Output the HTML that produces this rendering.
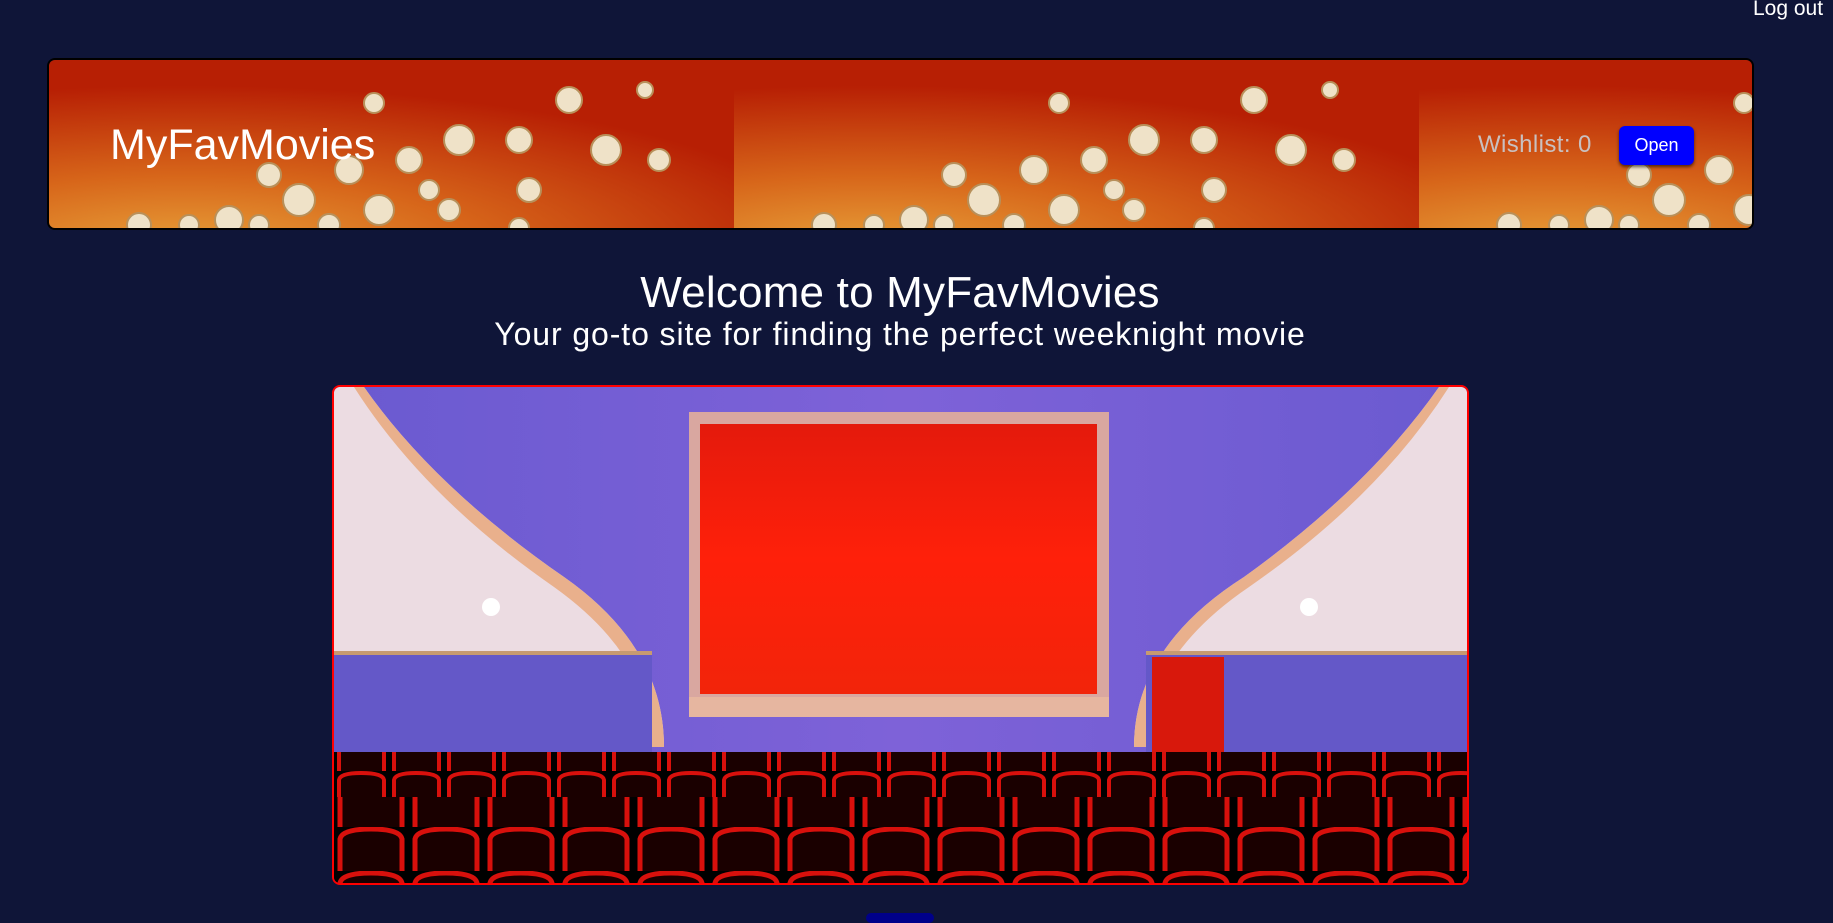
<!DOCTYPE html>
<html><head><meta charset="utf-8"><style>
*{margin:0;padding:0;box-sizing:border-box}
body{width:1833px;height:916px;background:#0f1538;font-family:"Liberation Sans",sans-serif;color:#fff;position:relative;overflow:hidden}
.logout{position:absolute;left:1753px;top:-3px;font-size:21px;color:#fff}
.banner{position:absolute;left:47px;top:58px;width:1707px;height:172px;border:2px solid #000;border-radius:8px;overflow:hidden}
.banner svg{position:absolute;left:0;top:0}
.logo{position:absolute;left:61px;top:61px;font-size:43px;color:#fff;letter-spacing:0px}
.wl{position:absolute;left:1429px;top:71px;font-size:24px;color:#c9c0c0;letter-spacing:0.4px}
.open{position:absolute;left:1570px;top:66px;width:75px;height:39px;background:#0000ff;border-radius:6px;color:#fff;font-size:18px;text-align:center;line-height:39px;box-shadow:0 2px 3px rgba(0,0,0,.6)}
h1{position:absolute;left:0;width:1800px;text-align:center;top:268px;font-size:44px;font-weight:normal;letter-spacing:0.2px}
h2{position:absolute;left:0;width:1800px;text-align:center;top:316px;font-size:32px;font-weight:normal;letter-spacing:0.9px}
.theater{position:absolute;left:332px;top:385px;width:1137px;height:500px;border:2px solid #f00;border-radius:8px;overflow:hidden;background:#000}
.btn2{position:absolute;left:866px;top:913px;width:68px;height:10px;background:#00008a;border-radius:6px}
</style></head><body>
<div class="logout">Log out</div>
<div class="banner">
<svg width="1707" height="172">
<defs>
<radialGradient id="bg" cx="0.2" cy="1.1" r="0.95">
<stop offset="0" stop-color="#e8a23a"/><stop offset="0.45" stop-color="#d7661a"/><stop offset="1" stop-color="#b71f04"/></radialGradient>
<pattern id="p" width="685" height="172" patternUnits="userSpaceOnUse">
<rect width="685" height="172" fill="url(#bg)"/>
<g fill="#efe2c8" stroke="#b8905a" stroke-width="2">
<circle cx="325" cy="43" r="10"/><circle cx="520" cy="40" r="13"/><circle cx="596" cy="30" r="8"/>
<circle cx="410" cy="80" r="15"/><circle cx="470" cy="80" r="13"/><circle cx="557" cy="90" r="15"/>
<circle cx="610" cy="100" r="11"/><circle cx="480" cy="130" r="12"/><circle cx="300" cy="110" r="14"/>
<circle cx="250" cy="140" r="16"/><circle cx="220" cy="115" r="12"/><circle cx="330" cy="150" r="15"/>
<circle cx="360" cy="100" r="13"/><circle cx="400" cy="150" r="11"/><circle cx="180" cy="160" r="14"/>
<circle cx="140" cy="165" r="10"/><circle cx="90" cy="165" r="12"/><circle cx="280" cy="165" r="11"/>
<circle cx="380" cy="130" r="10"/><circle cx="470" cy="168" r="10"/><circle cx="210" cy="165" r="10"/>
</g></pattern></defs>
<rect width="1707" height="172" fill="url(#p)"/>
</svg>
<div class="logo">MyFavMovies</div>
<div class="wl">Wishlist: 0</div>
<div class="open">Open</div>
</div>
<h1>Welcome to MyFavMovies</h1>
<h2>Your go-to site for finding the perfect weeknight movie</h2>
<div class="theater">
<svg width="1137" height="500" viewBox="0 0 1137 500">
<defs>
<linearGradient id="wall" x1="0" x2="1"><stop offset="0" stop-color="#6a5ad0"/><stop offset="0.5" stop-color="#7e62d8"/><stop offset="1" stop-color="#6a5ad0"/></linearGradient>
<linearGradient id="cur" x1="0" x2="0" y1="0" y2="1"><stop offset="0" stop-color="#e41a0c"/><stop offset="0.5" stop-color="#ff200a"/><stop offset="1" stop-color="#f2240a"/></linearGradient>
<pattern id="seat" width="75" height="44" patternUnits="userSpaceOnUse">
<rect width="75" height="44" fill="#000"/><path d="M6 44 V12 Q8 2 37 2 Q66 2 68 12 V44" fill="#1a0000" stroke="#d8100c" stroke-width="5"/></pattern>
<pattern id="seat2" width="55" height="32" patternUnits="userSpaceOnUse">
<rect width="55" height="32" fill="#000"/><path d="M5 32 V9 Q6 2 27 2 Q49 2 50 9 V32" fill="#1a0000" stroke="#d8100c" stroke-width="4"/></pattern>
</defs>
<rect width="1137" height="500" fill="url(#wall)"/>
<rect x="355" y="25" width="420" height="290" fill="#d9a7a0"/>
<rect x="366" y="37" width="397" height="270" fill="url(#cur)"/>
<rect x="355" y="310" width="420" height="20" fill="#e6b6a0"/>
<path d="M0 0 H30 Q100 100 230 190 Q330 260 330 360 H0Z" fill="#ecdce2"/>
<path d="M30 0 Q100 100 230 190 Q330 260 330 360 H318 Q318 270 220 200 Q90 110 20 0Z" fill="#e9b08c"/>
<path d="M1137 0 H1105 Q1035 100 910 190 Q800 260 800 360 H1137Z" fill="#ecdce2"/>
<path d="M1105 0 Q1035 100 910 190 Q800 260 800 360 H812 Q812 270 915 200 Q1045 110 1115 0Z" fill="#e9b08c"/>
<rect x="0" y="268" width="318" height="110" fill="#6458c8"/>
<rect x="812" y="268" width="325" height="110" fill="#6458c8"/>
<rect x="0" y="264" width="318" height="4" fill="#c79a70"/><rect x="812" y="264" width="325" height="4" fill="#c79a70"/>
<rect x="818" y="270" width="72" height="105" fill="#d8180c"/>
<circle cx="157" cy="220" r="9" fill="#fff"/><circle cx="975" cy="220" r="9" fill="#fff"/>
<rect x="0" y="365" width="1137" height="135" fill="url(#seat2)"/>
<rect x="0" y="410" width="1137" height="90" fill="url(#seat)"/>
</svg>
</div>
<div class="btn2"></div>
</body></html>
